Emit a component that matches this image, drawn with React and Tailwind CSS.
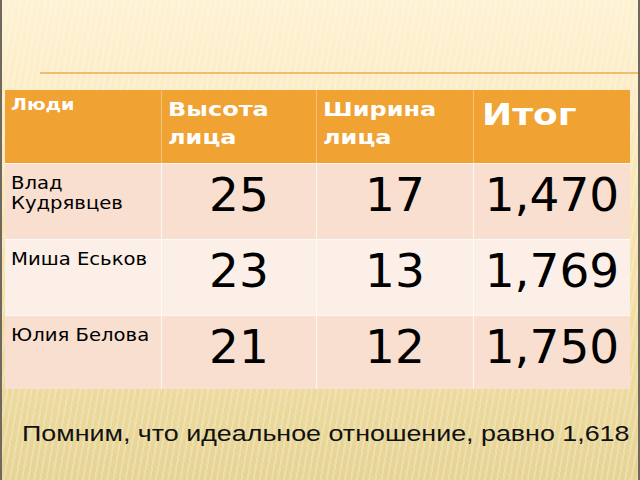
import React from 'react';

const rows = [
  { name: ['Влад', 'Кудрявцев'], h: '25', w: '17', r: '1,470', bg: 'bg-[#f9dfcf]', height: 'h-[76px]' },
  { name: ['Миша Еськов'], h: '23', w: '13', r: '1,769', bg: 'bg-[#fcefe8]', height: 'h-[76px]' },
  { name: ['Юлия Белова'], h: '21', w: '12', r: '1,750', bg: 'bg-[#f9dfcf]', height: 'h-[74px]' },
];

export default function App() {
  return (
    <div className="w-[640px] h-[480px] overflow-hidden border-x-2 border-[#6f685d] bg-[repeating-linear-gradient(100deg,rgba(255,255,255,0.22)_0px,rgba(255,255,255,0.22)_2px,transparent_2px,transparent_6px),linear-gradient(180deg,#fdf2d2_0%,#fbebc3_25%,#f4e0a8_60%,#e6d495_100%)] font-['DejaVu_Sans',sans-serif]">
      <div className="pt-[72px]">
        <div className="ml-[38px] h-[2px] bg-[#efbe70]" />
      </div>

      <div className="ml-[3px] mt-[16px] w-[625px] grid grid-cols-[157px_155px_157px_156px]">
        <div className="h-[73px] bg-[#f0a232] border-r border-[#f5c27e] pl-[6px] pt-[6px] text-white font-bold text-[16px] leading-[18px]">
          <span className="inline-block origin-left scale-x-120">Люди</span>
        </div>
        <div className="h-[73px] bg-[#f0a232] border-r border-[#f5c27e] pl-[6px] pt-[5px] text-white font-bold text-[20px] leading-[28px]">
          <div className="origin-left scale-x-120">Высота</div>
          <div className="origin-left scale-x-120">лица</div>
        </div>
        <div className="h-[73px] bg-[#f0a232] border-r border-[#f5c27e] pl-[6px] pt-[5px] text-white font-bold text-[20px] leading-[28px]">
          <div className="origin-left scale-x-120">Ширина</div>
          <div className="origin-left scale-x-120">лица</div>
        </div>
        <div className="h-[73px] bg-[#f0a232] pl-[8px] pt-[8px] text-white font-bold text-[30px] leading-[34px]">
          <div className="origin-left scale-x-120">Итог</div>
        </div>

        {rows.map((row, i) => (
          <React.Fragment key={i}>
            <div className={`${row.height} ${row.bg} border-t border-r border-white/70 pl-[6px] pt-[9px] text-black text-[18px] leading-[20px]`}>
              {row.name.map((n, j) => (
                <div key={j} className="origin-left scale-x-109 whitespace-nowrap">{n}</div>
              ))}
            </div>
            <div className={`${row.height} ${row.bg} border-t border-r border-white/70 pt-[7px] text-center text-black text-[47px] leading-[47px]`}>
              {row.h}
            </div>
            <div className={`${row.height} ${row.bg} border-t border-r border-white/70 pt-[7px] text-center text-black text-[47px] leading-[47px]`}>
              {row.w}
            </div>
            <div className={`${row.height} ${row.bg} border-t border-white/70 pt-[7px] text-center text-black text-[47px] leading-[47px]`}>
              {row.r}
            </div>
          </React.Fragment>
        ))}
      </div>

      <div className="mt-[32px] ml-[20px] text-[22px] leading-[26px] text-[#111] font-['Liberation_Sans',Arial,sans-serif] whitespace-nowrap origin-left scale-x-122">
        Помним, что идеальное отношение, равно 1,618
      </div>
    </div>
  );
}
